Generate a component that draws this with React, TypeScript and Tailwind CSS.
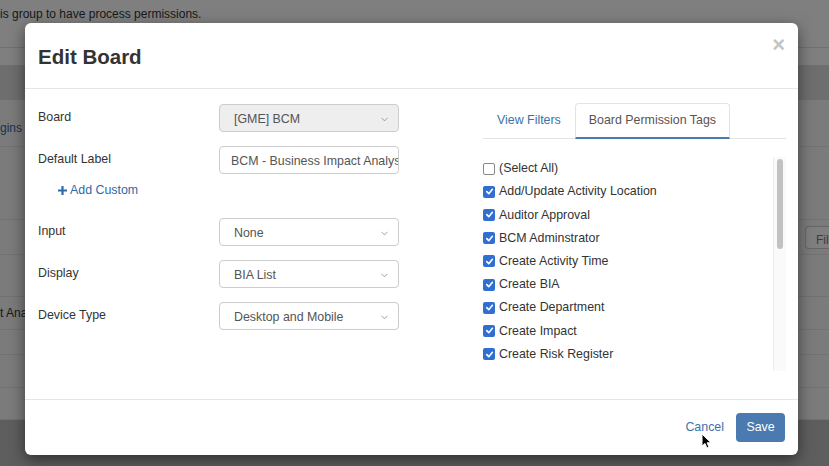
import { ChevronDown } from "lucide-react";

const tags = [
  { label: "(Select All)", checked: false },
  { label: "Add/Update Activity Location", checked: true },
  { label: "Auditor Approval", checked: true },
  { label: "BCM Adminstrator", checked: true },
  { label: "Create Activity Time", checked: true },
  { label: "Create BIA", checked: true },
  { label: "Create Department", checked: true },
  { label: "Create Impact", checked: true },
  { label: "Create Risk Register", checked: true },
  { label: "Create Role Mapping", checked: true },
];

const Select = ({ value, disabled }: { value: string; disabled?: boolean }) => (
  <div
    className={`w-[180px] h-[28px] flex items-center justify-between pl-[14px] pr-[8px] pt-[2px] border border-[#ccc] rounded-[4px] text-[12.4px] text-[#555] ${
      disabled ? "bg-[#eeeeee]" : "bg-white"
    }`}
  >
    <span>{value}</span>
    <ChevronDown size={11} strokeWidth={1.5} className="text-[#777]" />
  </div>
);

const Row = ({ label, children }: { label: string; children: React.ReactNode }) => (
  <div className="flex items-start">
    <div className="w-[181px] pt-[4px] leading-[18px] text-[12.4px] text-[#333]">{label}</div>
    {children}
  </div>
);

const Checkbox = ({ checked }: { checked: boolean }) =>
  checked ? (
    <span className="w-[12px] h-[12px] rounded-[2px] bg-[#2f6fd1] flex items-center justify-center shrink-0">
      <svg width="9" height="9" viewBox="0 0 10 10">
        <path d="M2 5.2 L4.2 7.4 L8.2 2.6" fill="none" stroke="white" strokeWidth="1.8" strokeLinecap="round" strokeLinejoin="round" />
      </svg>
    </span>
  ) : (
    <span className="w-[12px] h-[12px] rounded-[2px] border border-[#888] bg-white shrink-0" />
  );

export default function App() {
  return (
    <div className="relative w-[829px] h-[466px] overflow-hidden bg-[#f6f6f6] font-['Liberation_Sans',Arial,sans-serif]">
      {/* page behind the dialog */}
      <div className="flex flex-col h-full">
        <div className="h-[48px] bg-white border-b border-[#e2e2e2] text-[12px] text-[#333] pt-[5px]">
          is group to have process permissions.
        </div>
        <div className="h-[17px] bg-white" />
        <div className="h-[35px] bg-[#dcdcdc]" />
        <div className="h-[47px] border-b border-[#e4e4e4] flex items-end pb-[9px] text-[12px] text-[#2f6aa8]">
          gins
        </div>
        <div className="h-[73px] border-b border-[#e4e4e4]" />
        <div className="h-[35px] border-b border-[#e4e4e4] flex justify-end items-center">
          <div className="w-[24px] h-[23px] border border-[#ccc] rounded-l-[4px] border-r-0 text-[12px] text-[#777] pl-[10px] pt-[4px] bg-white overflow-hidden">
            Fil
          </div>
        </div>
        <div className="h-[42px] border-b border-[#e4e4e4]" />
        <div className="h-[33px] border-b border-[#e4e4e4] text-[12px] text-[#333] flex items-start pt-[7px]">
          t Ana
        </div>
        <div className="h-[25px] border-b border-[#e4e4e4]" />
        <div className="h-[33px] border-b border-[#e4e4e4]" />
        <div className="h-[32px] border-b border-[#e4e4e4]" />
        <div className="flex-1 bg-[#bdbdbd]" />
      </div>
      <div className="absolute inset-0 bg-black/50" />

      {/* dialog */}
      <div className="absolute left-[25px] top-[23px] w-[773px] h-[432px] bg-white rounded-[6px] shadow-[0_5px_15px_rgba(0,0,0,0.5)] flex flex-col">
        <div className="h-[66px] border-b border-[#e5e5e5] flex justify-between items-start pl-[13px] pr-[13px]">
          <h1 className="mt-[21px] text-[20.5px] leading-[26px] font-bold text-[#333]">Edit Board</h1>
          <span className="mt-[11px] text-[22px] font-bold text-[#c4c4c4] leading-[22px]">×</span>
        </div>

        <div className="h-[310px] flex pl-[13px] pr-[12px] pt-[15px]">
          <div className="w-[361px] flex flex-col">
            <Row label="Board">
              <Select value="[GME] BCM" disabled />
            </Row>
            <div className="mt-[14px]">
              <Row label="Default Label">
                <div className="w-[180px] h-[28px] flex items-center pl-[11px] pt-[2px] border border-[#ccc] rounded-[4px] text-[12.4px] text-[#555] overflow-hidden whitespace-nowrap">
                  BCM - Business Impact Analysis
                </div>
              </Row>
            </div>
            <div className="mt-[7px] ml-[20px] h-[18px] flex items-center gap-[3px] text-[12.4px] text-[#2f6aa8]">
              <svg width="9" height="9" viewBox="0 0 9 9">
                <path d="M3.4 0 H5.6 V3.4 H9 V5.6 H5.6 V9 H3.4 V5.6 H0 V3.4 H3.4 Z" fill="#2f6aa8" />
              </svg>
              <span>Add Custom</span>
            </div>
            <div className="mt-[19px] flex flex-col gap-[14px]">
              <Row label="Input">
                <Select value="None" />
              </Row>
              <Row label="Display">
                <Select value="BIA List" />
              </Row>
              <Row label="Device Type">
                <Select value="Desktop and Mobile" />
              </Row>
            </div>
          </div>

          <div className="ml-[84px] w-[303px] flex flex-col -mt-px">
            <div className="h-[36px] flex border-b border-[#e3e3e3]">
              <div className="px-[14px] flex items-center text-[12.4px] text-[#3b72ad]">View Filters</div>
              <div className="px-[13px] flex items-center text-[12.4px] text-[#555] border border-[#e3e3e3] border-b-2 border-b-[#4a7ab0] rounded-t-[4px] -mb-px">
                Board Permission Tags
              </div>
            </div>
            <div className="mt-[18px] h-[214px] flex overflow-hidden">
              <div className="flex-1 flex flex-col">
                {tags.map((t) => (
                  <div key={t.label} className="h-[23.2px] shrink-0 flex items-center gap-[4px] text-[12.4px] text-[#333]">
                    <Checkbox checked={t.checked} />
                    <span>{t.label}</span>
                  </div>
                ))}
              </div>
              <div className="w-[13px] h-full border-l border-[#eee] bg-[#fafafa] pt-[2px] flex justify-center">
                <div className="w-[6px] h-[90px] rounded-full bg-[#c2c2c2]" />
              </div>
            </div>
          </div>
        </div>

        <div className="flex-1 border-t border-[#e5e5e5] flex items-center justify-end gap-[12px] pr-[13px]">
          <span className="text-[12.4px] text-[#3b72ad]">Cancel</span>
          <button className="w-[49px] h-[29px] rounded-[4px] bg-[#4a7ab0] text-white text-[12.4px]">Save</button>
        </div>
      </div>

      {/* mouse cursor */}
      <svg className="absolute left-[701px] top-[433px]" width="11" height="17" viewBox="0 0 11 17">
        <path d="M1 1 L1 13 L4 10.5 L6 15 L8 14 L6 9.8 L10 9.8 Z" fill="black" stroke="white" strokeWidth="1" />
      </svg>
    </div>
  );
}
